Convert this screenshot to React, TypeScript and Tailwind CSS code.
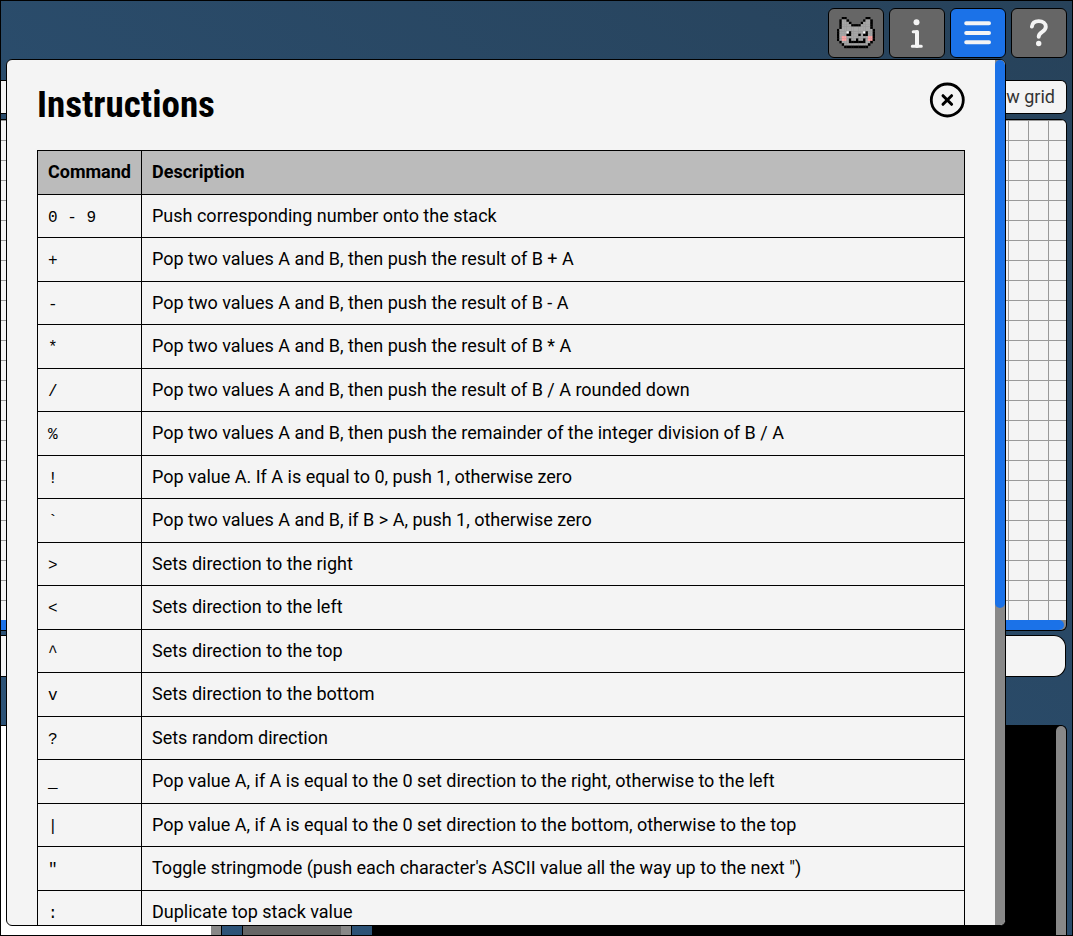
import React from 'react';

const commands: [string, string][] = [
  ['0 - 9', 'Push corresponding number onto the stack'],
  ['+', 'Pop two values A and B, then push the result of B + A'],
  ['-', 'Pop two values A and B, then push the result of B - A'],
  ['*', 'Pop two values A and B, then push the result of B * A'],
  ['/', 'Pop two values A and B, then push the result of B / A rounded down'],
  ['%', 'Pop two values A and B, then push the remainder of the integer division of B / A'],
  ['!', 'Pop value A. If A is equal to 0, push 1, otherwise zero'],
  ['`', 'Pop two values A and B, if B > A, push 1, otherwise zero'],
  ['>', 'Sets direction to the right'],
  ['<', 'Sets direction to the left'],
  ['^', 'Sets direction to the top'],
  ['v', 'Sets direction to the bottom'],
  ['?', 'Sets random direction'],
  ['_', 'Pop value A, if A is equal to the 0 set direction to the right, otherwise to the left'],
  ['|', 'Pop value A, if A is equal to the 0 set direction to the bottom, otherwise to the top'],
  ['"', 'Toggle stringmode (push each character\'s ASCII value all the way up to the next ")'],
  [':', 'Duplicate top stack value'],
];

const catRows = [
  '..XX........XX..',
  '.XooX......XooX.',
  '.XoooX....XoooX.',
  '.XooooXXXXooooX.',
  '.XooooooooooooX.',
  'XooooooooooooooX',
  'XooowXooooowXooX',
  'XoooXXoooXoXXooX',
  'XoppoooooooooppX',
  'XoppoXooXooXoppX',
  '.XoooXXXXXXXooX.',
  '..XooooooooooX..',
  '...XXXXXXXXXX...',
];

const catColors: Record<string, string> = { X: '#000000', o: '#a6a6a6', w: '#ffffff', p: '#ffa3a3' };

function CatIcon() {
  return (
    <svg width="38" height="33" viewBox="0 0 16 13.840" preserveAspectRatio="none" aria-hidden="true">
      {catRows.flatMap((row, y) =>
        row.split('').map((c, x) =>
          c === '.' ? null : <rect key={`${x}-${y}`} x={x} y={y} width="1.08" height="1.08" fill={catColors[c]} />,
        ),
      )}
    </svg>
  );
}

function HeaderButton({ label, active, children }: { label: string; active?: boolean; children: React.ReactNode }) {
  return (
    <button
      type="button"
      aria-label={label}
      className={`flex h-[50px] w-14 items-center justify-center rounded-md border border-black ${active ? 'bg-[#1b72e8]' : 'bg-[#666666]'}`}
    >
      {children}
    </button>
  );
}

export default function App() {
  return (
    <div className="relative flex h-screen min-h-[760px] flex-col overflow-hidden border border-black bg-linear-to-tr from-[#2d557b] to-[#27425a] font-['Roboto',sans-serif] text-[18px] leading-tight text-black">
      <header className="flex justify-end gap-[5px] pt-[7px] pr-[5px]">
        <HeaderButton label="Nyan mode">
          <CatIcon />
        </HeaderButton>
        <HeaderButton label="About">
          <svg width="34" height="34" viewBox="0 0 34 34" fill="none" stroke="#f4f4f4" strokeLinecap="round" strokeLinejoin="round" aria-hidden="true">
            <circle cx="16.500" cy="6.300" r="3" fill="#f4f4f4" stroke="none" />
            <path d="M13.200 15.800H17M12.300 30.300H21.300" strokeWidth="3" />
            <path d="M17 16V30" strokeWidth="4" />
          </svg>
        </HeaderButton>
        <HeaderButton label="Instructions" active>
          <svg width="28" height="24" viewBox="0 0 28 24" stroke="#f4f4f4" strokeWidth="4" strokeLinecap="round" aria-hidden="true">
            <path d="M2.200 2.300h22.800M2.200 12h22.800M2.200 21.200h22.800" />
          </svg>
        </HeaderButton>
        <HeaderButton label="Help">
          <svg width="22" height="30" viewBox="0 0 22 30" fill="none" stroke="#f4f4f4" strokeWidth="3.900" strokeLinecap="round" strokeLinejoin="round" aria-hidden="true">
            <path d="M3.900 8.600C4.300 5 7 3.100 10.700 3.100c4.300 0 7.100 2.300 7.100 5.700 0 5.200-7.100 5-7.100 10" />
            <circle cx="10.700" cy="25.500" r="2.700" fill="#f4f4f4" stroke="none" />
          </svg>
        </HeaderButton>
      </header>

      <main className="flex min-h-0 flex-1 flex-col pt-[22px] pr-[5px]">
        <div className="flex h-[34px] shrink-0 items-center justify-end rounded-r-md border-y border-r border-black bg-[#f4f4f4] pr-[11px] text-[#333333]">
          <button type="button">Show grid</button>
        </div>

        <div className="mt-[5px] flex h-[512px] shrink-0 flex-col overflow-hidden rounded-r-md border-y border-r border-black bg-[#888888]">
          <svg className="w-full flex-1 bg-[#f4f4f4]" aria-hidden="true">
            <defs>
              <pattern id="cells" width="20" height="20" patternUnits="userSpaceOnUse" x="7" y="0">
                <path d="M0.500 0V20M0 0.500H20" stroke="#999999" fill="none" />
              </pattern>
            </defs>
            <rect width="100%" height="100%" fill="url(#cells)" />
          </svg>
          <div className="mr-0.5 h-2.5 rounded-r-full bg-[#1b72e8]" />
        </div>

        <input aria-label="Program input" className="mt-1 mr-px h-[42px] shrink-0 rounded-r-xl border-y border-r border-black bg-[#f4f4f4]" />

        <div className="mt-12 flex min-h-0 flex-1 gap-5">
          <div className="flex w-[221px] justify-end border-t border-r border-black bg-white">
            <div className="w-2.5 bg-[#888888]" />
          </div>
          <div className="flex w-[110px] justify-end border-x border-t border-black bg-[#666666]">
            <div className="w-2.5 bg-[#888888]" />
          </div>
          <div className="flex flex-1 justify-end rounded-tr-md border-x border-t border-black bg-black">
            <div className="w-2.5 rounded-t-full bg-[#888888]" />
          </div>
        </div>
      </main>

      <section
        role="dialog"
        aria-labelledby="dialog-title"
        className="absolute top-[58px] right-[66px] bottom-[9px] left-[5px] flex overflow-hidden rounded-md border border-black bg-[#f4f4f4]"
      >
        <div className="flex-1 overflow-hidden px-[30px] pt-[22px]">
          <div className="flex items-start justify-between">
            <h1 id="dialog-title" className="font-['Roboto_Condensed','Roboto',sans-serif] text-[37px] leading-[45px] font-bold">
              Instructions
            </h1>
            <button type="button" aria-label="Close">
              <svg width="36" height="36" viewBox="0 0 36 36" fill="none" stroke="#000000" strokeLinecap="round" aria-hidden="true">
                <circle cx="18.300" cy="18" r="16" strokeWidth="2.800" />
                <path d="M14 13.700l8.600 8.600M22.600 13.700l-8.600 8.600" strokeWidth="3" />
              </svg>
            </button>
          </div>
          <table className="mt-[23px] w-full border-collapse text-left">
            <thead>
              <tr className="bg-[#bbbbbb]">
                <th className="w-[104px] border border-black p-2.5 font-bold">Command</th>
                <th className="border border-black p-2.5 font-bold">Description</th>
              </tr>
            </thead>
            <tbody>
              {commands.map(([command, description]) => (
                <tr key={command}>
                  <td className="border border-black px-2.5 pt-3 pb-2 font-['Liberation_Mono',monospace] text-base leading-none">{command}</td>
                  <td className="border border-black p-2.5">{description}</td>
                </tr>
              ))}
            </tbody>
          </table>
        </div>
        <div className="w-2.5 shrink-0 bg-[#888888]">
          <div className="h-[548px] rounded-full bg-[#1b72e8]" />
        </div>
      </section>
    </div>
  );
}
